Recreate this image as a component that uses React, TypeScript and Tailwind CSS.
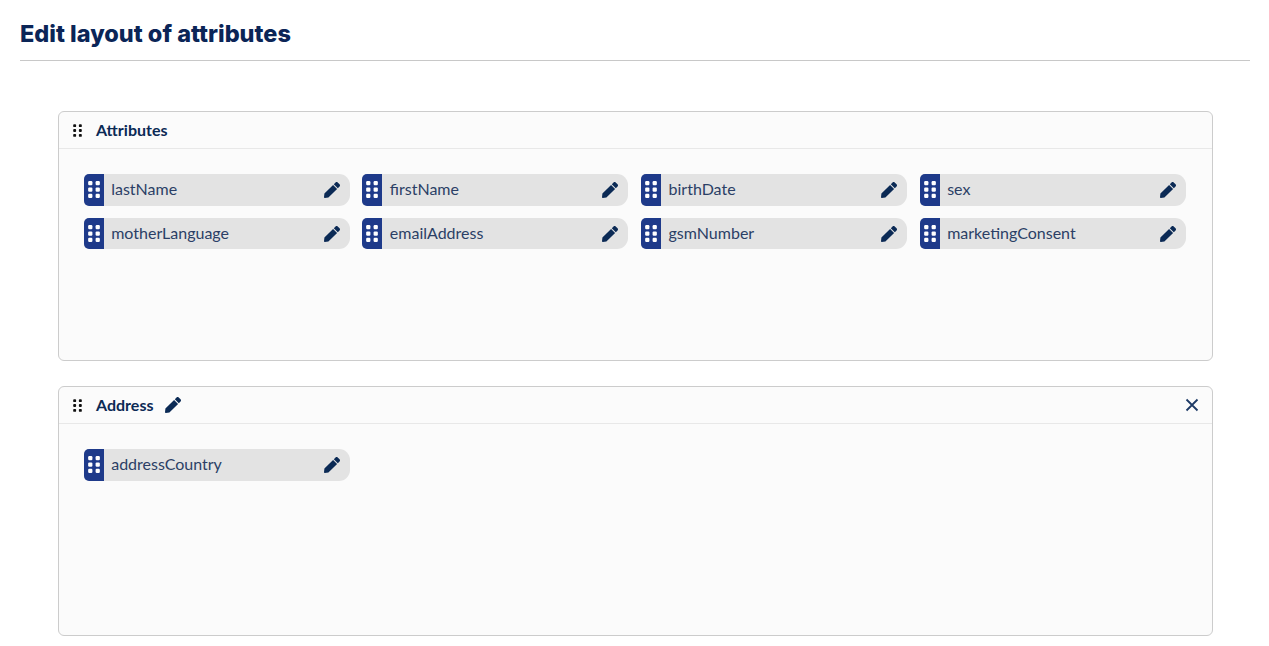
import { FaPen } from 'react-icons/fa'

const mulish = "font-['Lato','Noto_Sans',sans-serif]"

function DragDots({ className, size = 3.4 }: { className: string; size?: number }) {
  const offset = size / 2
  return (
    <svg className={className} viewBox="0 0 11 16" fill="currentColor" aria-hidden="true">
      {[0, 1, 2].map((row) =>
        [0, 1].map((col) => (
          <rect
            key={`${row}-${col}`}
            x={col === 0 ? 2 - offset : 9 - offset}
            y={2 + row * 6 - offset}
            width={size}
            height={size}
            rx="1.1"
          />
        )),
      )}
    </svg>
  )
}

function Chip({ name }: { name: string }) {
  return (
    <div className="flex h-[31.7px] items-center rounded-l-[5px] rounded-r-[11px] bg-[#e3e3e3] overflow-hidden">
      <div className="flex h-full w-5 shrink-0 items-center justify-center bg-[#1e3a8a] text-white">
        <DragDots className="h-[17px] w-[12px]" size={4} />
      </div>
      <span className="ml-[7.5px] flex-1 -translate-y-[1px] text-[16px] text-[#2b3f66]">{name}</span>
      <FaPen className="mr-[10px] h-4 w-4 text-[#0b2a55]" />
    </div>
  )
}

function Card({ title, editable, attributes }: { title: string; editable?: boolean; attributes: string[] }) {
  return (
    <section className="flex h-[250px] flex-col rounded-md border border-[#cccccc] bg-[#fbfbfb]">
      <header className="flex h-[37px] shrink-0 items-center border-b border-[#e8e8e8] pl-[14px] pr-[13px]">
        <DragDots className="h-[13px] w-[9px] text-[#111111]" size={3.6} />
        <span className="ml-[14px] text-[16px] font-bold text-[#0b2a55]">{title}</span>
        {editable && <FaPen className="ml-[12px] h-4 w-4 text-[#0b2a55]" />}
        {editable && (
          <svg className="ml-auto h-[14px] w-[14px] text-[#1e3a66]" viewBox="0 0 14 14" fill="none" stroke="currentColor" strokeWidth="1.8" aria-hidden="true">
            <path d="M1.5 1.5l11 11M12.5 1.5l-11 11" />
          </svg>
        )}
      </header>
      <div className="grid grid-cols-4 gap-x-[12.67px] gap-y-3 pl-[24.7px] pr-[26.3px] pt-[25px]">
        {attributes.map((name) => (
          <Chip key={name} name={name} />
        ))}
      </div>
    </section>
  )
}

export default function App() {
  return (
    <div className={`min-h-screen bg-white pl-5 pr-[19px] ${mulish}`}>
      <div className="flex h-[61px] items-start border-b border-[#c8c8c8] pt-[17px]">
        <h1 className="font-['Inter',sans-serif] text-[23.5px] font-extrabold leading-[34px] text-[#0b2557]">
          Edit layout of attributes
        </h1>
      </div>
      <div className="ml-[38px] mr-[37px] mt-[50px] flex flex-col gap-[25px]">
        <Card
          title="Attributes"
          attributes={['lastName', 'firstName', 'birthDate', 'sex', 'motherLanguage', 'emailAddress', 'gsmNumber', 'marketingConsent']}
        />
        <Card title="Address" editable attributes={['addressCountry']} />
      </div>
    </div>
  )
}
